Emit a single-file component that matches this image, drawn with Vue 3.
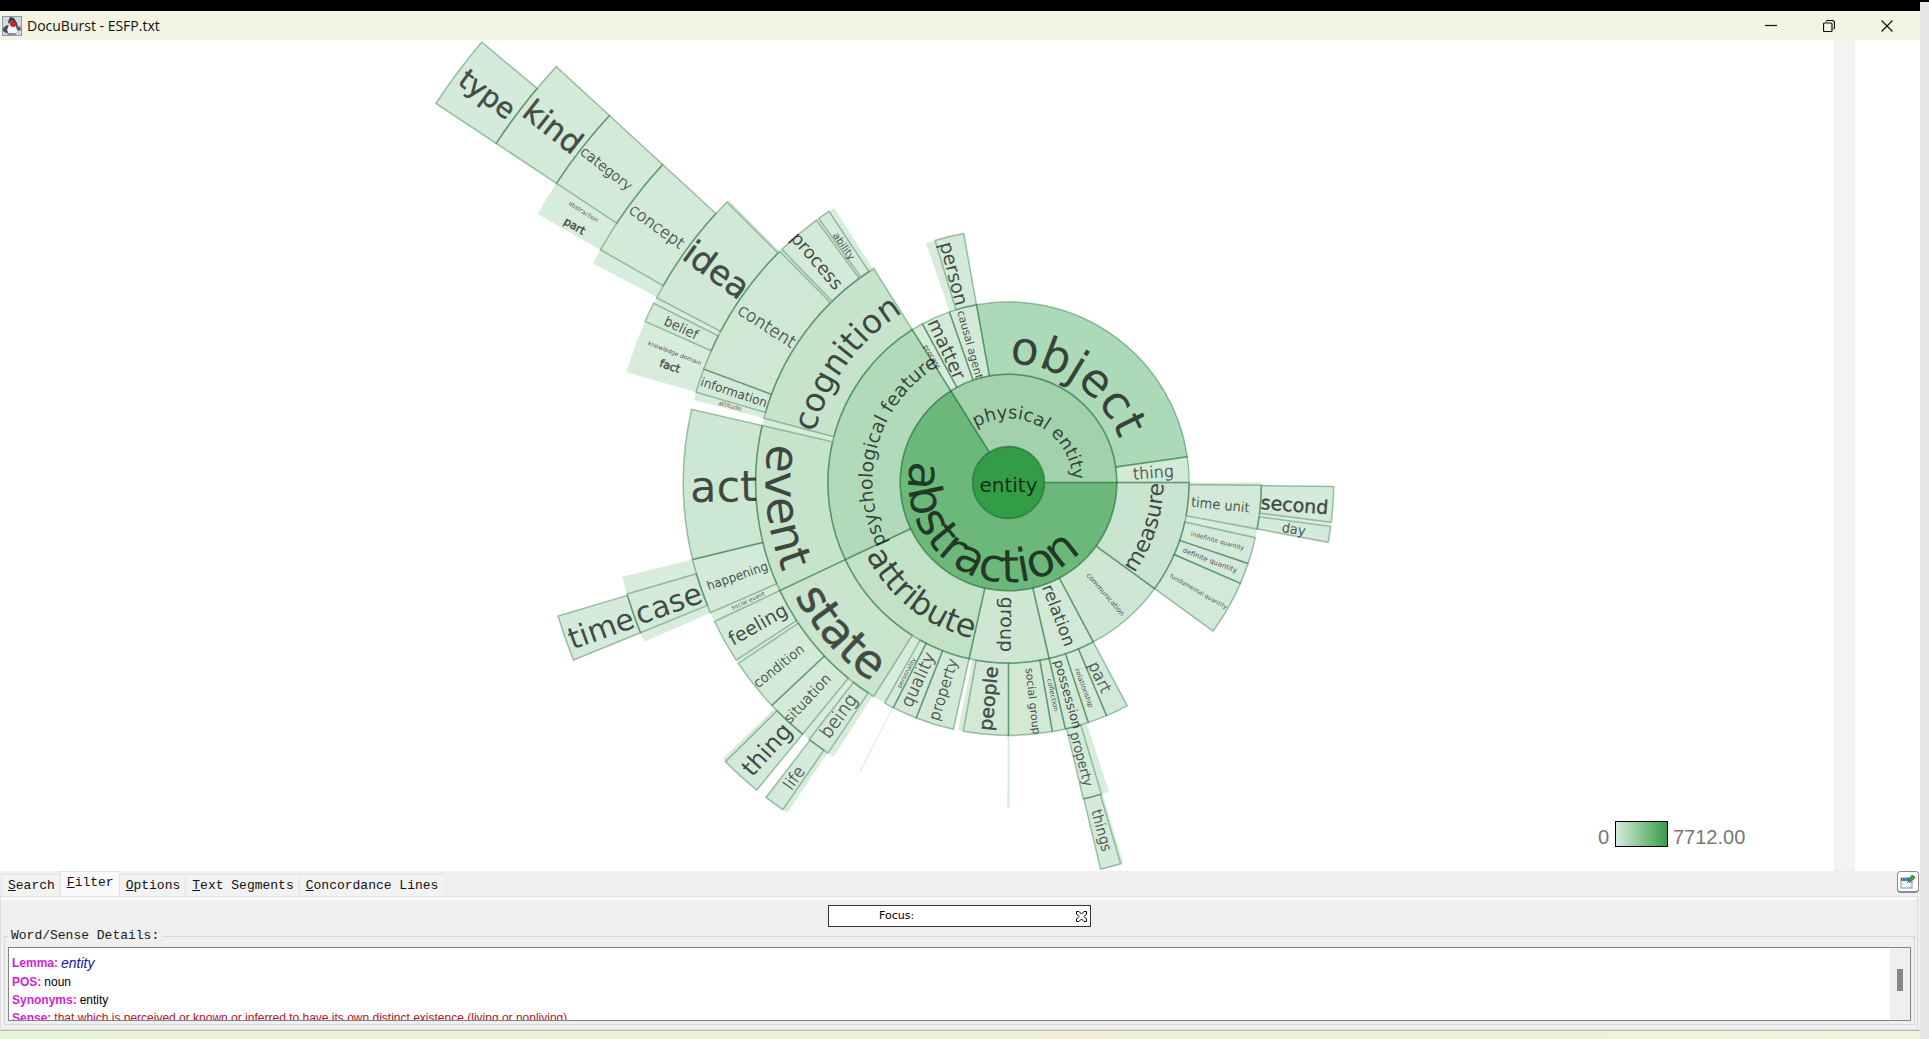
<script setup>
import { ref } from 'vue'

const CX = 1008.5
const CY = 442.5
const CORE = 36
const RING = 72.3

const tabs = ['Search', 'Filter', 'Options', 'Text Segments', 'Concordance Lines']
const activeTab = ref('Filter')
const focusText = ref('')

const inner = (level) => CORE + RING * (level - 1)
const outer = (level) => CORE + RING * level

function polar(r, deg) {
  const a = (deg * Math.PI) / 180
  return [CX + r * Math.cos(a), CY + r * Math.sin(a)].map((n) => n.toFixed(2)).join(' ')
}

function sector([level, from, to]) {
  const big = to - from > 180 ? 1 : 0
  const r0 = inner(level)
  const r1 = outer(level)
  return `M${polar(r0, from)}L${polar(r1, from)}A${r1} ${r1} 0 ${big} 1 ${polar(r1, to)}L${polar(r0, to)}A${r0} ${r0} 0 ${big} 0 ${polar(r0, from)}Z`
}

// [level, start angle, end angle, fill], degrees clockwise from east
const cells = [
  [1, 237.8, 360, '#a1d2ab'],
  [1, 0, 237.8, '#6cb87a'],
  [2, 259.8, 351.8, '#acd9b7'],
  [2, 351.8, 360, '#d3ead8'],
  [2, 250.9, 259.8, '#d3ead8'],
  [2, 241.5, 250.9, '#d3ead8'],
  [2, 237.8, 241.5, '#d6ebda'],
  [2, 0, 36, '#c9e5cf'],
  [2, 36, 62, '#cde7d2'],
  [2, 62, 77, '#d1e9d6'],
  [2, 77, 102.6, '#cde7d2'],
  [2, 102.6, 154.7, '#c2e2c8'],
  [2, 154.7, 237.8, '#b0dab9'],
  [3, 253.1, 259.8, '#d3ead8'],
  [3, 0.6, 10.6, '#d3e9d7'],
  [3, 12.6, 18.7, '#d3e9d9'],
  [3, 18.7, 23.5, '#d3e9d9'],
  [3, 23.5, 36, '#d2e9d8'],
  [3, 62, 67.2, '#d3e9d8'],
  [3, 67.2, 71.6, '#d5ebd9'],
  [3, 71.6, 77, '#d3e9d8'],
  [3, 77, 80, '#d3e9d8'],
  [3, 80, 90, '#d2e9d6'],
  [3, 90, 100.3, '#d1e9d5'],
  [3, 102.6, 111.4, '#d2e9d6'],
  [3, 111.4, 117.1, '#d3e9d7'],
  [3, 117.1, 119.3, '#d5ebd9'],
  [3, 122.2, 154.7, '#c9e5ce'],
  [3, 154.7, 193, '#c6e4cc'],
  [3, 194.7, 237.8, '#c6e4cb'],
  [4, 0.7, 7, '#d4eada'],
  [4, 7.8, 10.6, '#d4eada'],
  [4, 73.4, 76.7, '#d4eada'],
  [4, 123.7, 127.8, '#d4ead9'],
  [4, 129.3, 136.7, '#d3ead7'],
  [4, 136.7, 146.2, '#d2ead6'],
  [4, 146.9, 154.7, '#d2ead7'],
  [4, 156.4, 166.3, '#d2ead7'],
  [4, 166.3, 193, '#cce7d2'],
  [4, 196.1, 200.4, '#d3ead8'],
  [4, 200.4, 225.3, '#cfe8d3'],
  [4, 225.8, 233.8, '#d3ead9'],
  [4, 234.3, 236.5, '#d4eada'],
  [5, 73.6, 76.6, '#d4eada'],
  [5, 124.6, 127.6, '#d4eada'],
  [5, 129.3, 135.4, '#d4ead9'],
  [5, 157.8, 163.7, '#d3ead8'],
  [5, 203.9, 206.8, '#d4ead9'],
  [5, 207.7, 224.9, '#d0e9d5'],
  [6, 157.8, 163.5, '#d4eada'],
  [6, 209.7, 222.6, '#d3ead9'],
  [7, 213.5, 222.6, '#d3ead7'],
  [8, 213.5, 222.6, '#d3ead6'],
  [9, 213.5, 219.9, '#d4eadb']
]

// collapsed siblings, painted without an outline
const remainders = [
  [3, 0, 0.6], [3, 10.6, 12.6], [3, 100.3, 101.5], [3, 119.3, 122.2],
  [3, 193, 194.7], [3, 251, 253.1], [4, 7, 7.8], [4, 72, 73.4],
  [4, 122.5, 123.7], [4, 127.8, 129.3], [4, 146.2, 146.9], [4, 154.7, 156.4],
  [4, 194.7, 196.1], [4, 225.3, 225.8], [4, 233.8, 234.3], [4, 236.5, 237.6],
  [5, 73.2, 73.6], [5, 123.8, 124.6], [5, 135.4, 136], [5, 156.4, 157.8],
  [5, 163.7, 166.3], [5, 196.1, 203.9], [5, 206.8, 207.7], [5, 224.9, 225.3],
  [6, 207.8, 209.7], [7, 209.7, 213.5],
  [4, 89.8, 90.2], [4, 117.1, 117.3]
]

// [text, radius, angle, font size, weight class]
const radial = [
  ['thing', 145, 356, 16, 'light'],
  ['causal agent', 143, 254.5, 11],
  ['matter', 147, 245.2, 19],
  ['process', 147, 238.8, 7],
  ['person', 216, 255.4, 19],
  ['communication', 148, 49, 7],
  ['relation', 142, 69.2, 17],
  ['group', 142, 90.5, 19],
  ['time unit', 213, 6, 13, 'light'],
  ['indefinite quantity', 217, 15.6, 6],
  ['definite quantity', 216, 21.1, 7],
  ['fundamental quantity', 219, 29.8, 6],
  ['part', 215, 64.8, 16, 'light'],
  ['relationship', 219, 69.8, 7],
  ['possession', 220, 74.3, 13],
  ['collection', 217, 78.2, 7],
  ['social group', 220, 83.6, 11],
  ['people', 217, 95.3, 19, 'heavy'],
  ['property', 217, 107.5, 15, 'light'],
  ['quality', 217, 114.7, 17, 'light'],
  ['personality', 216, 118.2, 6],
  ['second', 287, 4.5, 19, 'heavy'],
  ['day', 289, 9.3, 13, 'light'],
  ['property', 286, 75.2, 13, 'light'],
  ['being', 289, 126.1, 18, 'light'],
  ['situation', 295, 133, 14, 'light'],
  ['condition', 294, 141.4, 13, 'light'],
  ['feeling', 288, 150.5, 19],
  ['social event', 286, 155.6, 6],
  ['happening', 287, 161, 12, 'light'],
  ['act', 285, 179.2, 43],
  ['attitude', 289, 195.4, 6],
  ['information', 289, 198.2, 12, 'light'],
  ['content', 288, 213, 17, 'light'],
  ['process', 293, 229.2, 18],
  ['ability', 288, 235.2, 10],
  ['things', 360, 75, 14, 'light'],
  ['life', 365, 126, 16, 'light'],
  ['thing', 360, 132.2, 24],
  ['case', 361, 160.4, 30],
  ['fact', 358, 199, 11, 'heavy'],
  ['knowledge domain', 358, 201.2, 6],
  ['belief', 362, 205.3, 13, 'light'],
  ['idea', 361, 216.1, 34, 'heavy'],
  ['time', 433, 160.3, 30],
  ['concept', 435, 216.1, 16, 'light'],
  ['part', 504, 210.6, 11, 'heavy'],
  ['abstraction', 504, 212.5, 6],
  ['category', 510, 218, 14, 'light'],
  ['kind', 578, 218, 31, 'heavy'],
  ['type', 650, 216.7, 28, 'heavy']
]

// [text, baseline radius, middle angle, font size, direction, weight class]
const arcs = [
  ['physical entity', 64, 298.5, 18, 1],
  ['abstraction', 100, 118, 46, -1],
  ['object', 119, 304.5, 46, 1],
  ['measure', 155, 18, 22, -1],
  ['attribute', 160, 128, 32, -1],
  ['psychological feature', 136, 196.3, 19, 1],
  ['cognition', 200, 216.3, 33, 1],
  ['event', 243, 173.8, 46, -1],
  ['state', 242, 138.2, 46, -1, 'heavy']
]

function arcPath([, r, mid, , dir]) {
  return `M${polar(r, mid - 110 * dir)}A${r} ${r} 0 1 ${dir > 0 ? 1 : 0} ${polar(r, mid + 110 * dir)}`
}

function place([, r, angle]) {
  const turn = angle > 90.6 && angle < 270 ? angle - 180 : angle
  return `translate(${polar(r, angle)}) rotate(${turn})`
}
</script>

<template>
  <div class="screen">
    <div class="window">
      <div class="top-edge"></div>
      <header class="titlebar">
        <svg class="app-icon" width="20" height="20" viewBox="0 0 20 20" aria-hidden="true">
          <rect x="0.5" y="0.5" width="19" height="19" fill="#cfd9e4" stroke="#8a97a5" />
          <path d="M1 12 L5 9 L8 10 L8 16 L4 17 L1 15Z" fill="#4a5058" />
          <path d="M8 1 L12 2 L15 7 L16 12 L13 11 L13 6 L9 5 L7 8 L6 6Z" fill="#3a3e44" />
          <path d="M7 9 L13 9 L16 15 L13 18 L7 18 L5 14Z" fill="#f7f9fb" />
          <path d="M14 12 L18 10 L19 14 L16 15Z" fill="#555d66" />
          <path d="M4 17 L15 17 L13 19 L6 19Z" fill="#878f99" />
          <circle cx="11" cy="8" r="3" fill="#c42a2a" />
        </svg>
        <h1>DocuBurst - ESFP.txt</h1>
        <div class="controls">
          <button type="button" aria-label="Minimize">
            <svg width="12" height="12" viewBox="0 0 12 12"><path d="M0 5.5H12" /></svg>
          </button>
          <button type="button" aria-label="Restore">
            <svg width="12" height="12" viewBox="0 0 12 12">
              <rect x="0.5" y="3" width="8.5" height="8.5" rx="1" />
              <path d="M3 1.5Q3.5 .5 5 .5H9Q11.5 .5 11.5 3V7Q11.5 8.5 10.5 9" />
            </svg>
          </button>
          <button type="button" aria-label="Close">
            <svg width="12" height="12" viewBox="0 0 12 12"><path d="M0.5 0.5L11.5 11.5M11.5 0.5L0.5 11.5" /></svg>
          </button>
        </div>
      </header>

      <main class="stage">
        <svg class="burst" viewBox="0 0 1834 831" role="img" aria-label="DocuBurst">
          <defs>
            <linearGradient id="scale">
              <stop offset="0" stop-color="#d9ecdd" />
              <stop offset="1" stop-color="#339c47" />
            </linearGradient>
            <path v-for="(a, i) in arcs" :id="'arc' + i" :key="i" :d="arcPath(a)" />
          </defs>
          <path v-for="(c, i) in remainders" :key="'r' + i" :d="sector(c)" fill="#d8ecdc" />
          <path v-for="(c, i) in cells" :key="'f' + i" :d="sector(c)" :fill="c[3]" />
          <circle :cx="CX" :cy="CY" :r="CORE" fill="#339c47" />
          <g class="outline">
            <path v-for="(c, i) in cells" :key="'s' + i" :d="sector(c)" />
            <circle :cx="CX" :cy="CY" :r="CORE" />
          </g>
          <g class="words">
            <text :x="CX" :y="CY + 9" font-size="20">entity</text>
            <text v-for="(a, i) in arcs" :key="'a' + i" :font-size="a[3]" :class="a[5]">
              <textPath :href="'#arc' + i" startOffset="50%">{{ a[0] }}</textPath>
            </text>
            <text
              v-for="(w, i) in radial"
              :key="'w' + i"
              :transform="place(w)"
              :font-size="w[3]"
              :class="w[4]"
              dy="0.35em"
            >{{ w[0] }}</text>
          </g>
          <g class="legend">
            <text x="1598" y="804">0</text>
            <rect x="1615.5" y="781.5" width="52" height="25" fill="url(#scale)" />
            <text x="1673" y="804">7712.00</text>
          </g>
        </svg>
        <div class="gutter"></div>
        <div class="margin"></div>
      </main>

      <section class="panel">
        <div class="tabrow">
          <div class="tabs" role="tablist">
            <button
              v-for="t in tabs"
              :key="t"
              type="button"
              role="tab"
              :aria-selected="t === activeTab"
              :class="{ active: t === activeTab }"
              @click="activeTab = t"
            ><u>{{ t[0] }}</u>{{ t.slice(1) }}</button>
          </div>
          <button class="pin" type="button" aria-label="Pin">
            <svg width="16" height="14" viewBox="0 0 16 14">
              <rect x="1" y="3" width="11" height="10" fill="#eef7fb" stroke="#7b93ad" />
              <rect x="1" y="3" width="11" height="3" fill="#3f86c4" />
              <path d="M7 8L10 5" stroke="#555" />
              <path d="M8 4L10 3L12 0L15 2L14 4L11 6L10 8Z" fill="#3c9a49" stroke="#1f5c2a" stroke-width="0.6" />
            </svg>
          </button>
        </div>
        <div class="body">
          <div class="focus">
            <label for="focus">Focus:</label>
            <input id="focus" v-model="focusText" type="text" />
            <button type="button" aria-label="Clear focus" @click="focusText = ''">
              <svg width="11" height="11" viewBox="0 0 11 11">
                <path d="M.5 .5H3L5.5 3L8 .5H10.5V3L8 5.5L10.5 8V10.5H8L5.5 8L3 10.5H.5V8L3 5.5L.5 3Z" />
              </svg>
            </button>
          </div>
          <fieldset>
            <legend>Word/Sense Details:</legend>
            <div class="details">
              <dl>
                <div><dt>Lemma:</dt> <dd class="lemma">entity</dd></div>
                <div><dt>POS:</dt> <dd>noun</dd></div>
                <div><dt>Synonyms:</dt> <dd>entity</dd></div>
                <div><dt>Sense:</dt> <dd class="sense">that which is perceived or known or inferred to have its own distinct existence (living or nonliving)</dd></div>
              </dl>
              <div class="scroll"><div class="thumb"></div></div>
            </div>
          </fieldset>
        </div>
      </section>
      <footer class="desktop"></footer>
    </div>
    <div class="side"></div>
  </div>
</template>

<style>
body {
  margin: 0;
  background: #fff;
}
</style>

<style scoped>
.screen {
  display: flex;
  min-height: 100vh;
  font-family: "Liberation Sans", Arial, sans-serif;
}
.window {
  flex: 1;
  min-width: 0;
  display: flex;
  flex-direction: column;
}
.side {
  width: 9px;
  background: #e7e7e7;
  border-top: 2px solid #000;
  box-sizing: border-box;
}
.top-edge {
  height: 11px;
  background: #000;
}
.titlebar {
  height: 29px;
  display: flex;
  align-items: center;
  background: #f3f4e4;
}
.app-icon {
  margin-left: 2px;
}
h1 {
  margin: 0 0 0 5px;
  flex: 1;
  font: 400 14px/20px "Open Sans", "Noto Sans", sans-serif;
  color: #111;
}
button {
  font: inherit;
  padding: 0;
  border: 0;
  background: none;
}
.controls {
  display: flex;
  padding-right: 4px;
}
.controls button {
  width: 58px;
  height: 29px;
  display: flex;
  align-items: center;
  justify-content: center;
}
.controls svg {
  fill: none;
  stroke: #111;
  stroke-width: 1.2;
}
.stage {
  display: flex;
  background: #fff;
}
.burst {
  flex: 1;
  min-width: 0;
  height: auto;
  display: block;
}
.gutter {
  width: 21px;
  background: #f3f3f3;
}
.margin {
  width: 65px;
}
.outline {
  fill: none;
  stroke: rgba(20, 100, 45, 0.38);
  stroke-width: 1.5;
}
.words {
  fill: rgba(0, 0, 0, 0.7);
  font-family: "DejaVu Sans", Verdana, sans-serif;
  text-anchor: middle;
}
.light {
  font-family: "DejaVu Sans Light", "DejaVu Sans", Verdana, sans-serif;
  font-weight: 200;
  fill: #475049;
  stroke: #475049;
  stroke-width: 0.4;
}
.heavy {
  fill: #424b44;
  stroke: #424b44;
  stroke-width: 0.4;
}
.legend {
  font-size: 20px;
  fill: #777;
}
.legend rect {
  stroke: #000;
}
.panel {
  background: #efefef;
  color: #1a1a1a;
  border-bottom: 1px solid #b9bab4;
}
.tabrow {
  display: flex;
  justify-content: space-between;
  height: 25px;
  padding: 0 1px 0 1px;
}
.tabs {
  display: flex;
  align-items: flex-end;
}
.tabs button {
  height: 22px;
  padding: 0 5px 0 6px;
  border: 1px solid #e2e2e2;
  border-width: 1px 0 0 1px;
  background: #f2f2f2;
  font: 13px/20px "Liberation Mono", monospace;
  color: #111;
}
.tabs .active {
  height: 25px;
  background: #fafafa;
  padding-bottom: 3px;
}
.pin {
  box-sizing: border-box;
  width: 22px;
  height: 22px;
  display: flex;
  align-items: center;
  justify-content: center;
  background: #fff;
  border: 1px solid #8b8b8b;
  border-bottom-width: 2px;
  border-radius: 4px;
}
.body {
  border: 1px solid #dedede;
  border-top-color: #e0e0e0;
  box-shadow: inset 0 3px #fafafa;
  margin-right: 2px;
  padding: 8px 2px 4px 3px;
}
.focus {
  box-sizing: border-box;
  width: 263px;
  height: 22px;
  margin: 0 auto;
  display: flex;
  align-items: center;
  border: 1px solid #333;
  background: #fff;
  padding: 0 3px 0 50px;
  font: 11px/20px "DejaVu Sans", Verdana, sans-serif;
  color: #000;
}
.focus input {
  flex: 1;
  min-width: 0;
  height: 18px;
  padding: 0 4px;
  border: 0;
  outline: 0;
  font: inherit;
}
.focus button {
  display: flex;
}
.focus button svg {
  fill: #fff;
  stroke: #000;
}
fieldset {
  min-width: 0;
  margin: 1px 0 0;
  padding: 3px 3px 3px;
  border: 1px solid #d9d9d9;
}
legend {
  padding: 0 3px;
  font: 13px/16px "Liberation Mono", monospace;
}
.details {
  box-sizing: border-box;
  height: 74px;
  display: flex;
  overflow: hidden;
  border: 1px solid #82828a;
  background: #fff;
}
dl {
  flex: 1;
  margin: 0;
  padding: 5px 3px;
  font-size: 12px;
  line-height: 18px;
}
dl div {
  display: flex;
  gap: 3px;
  white-space: nowrap;
}
dt {
  font-weight: 700;
  color: #d41fd4;
}
dd {
  margin: 0;
  color: #000;
}
dl div:first-child {
  line-height: 20px;
}
.lemma {
  font-size: 14px;
  font-style: italic;
  color: #1414a8;
}
.sense {
  color: #b3141c;
}
.scroll {
  width: 20px;
  background: #efefef;
  display: flex;
  align-items: center;
  justify-content: center;
}
.thumb {
  width: 6px;
  height: 22px;
  margin-bottom: 8px;
  background: #868686;
}
.desktop {
  flex: 1;
  min-height: 7px;
  background: linear-gradient(90deg, #e4f3d6, #f1f1d6 15%, #e9f2d6 42%, #f2f1d6 55%, #eef2d8 75%, #f3f2dc);
}
</style>
